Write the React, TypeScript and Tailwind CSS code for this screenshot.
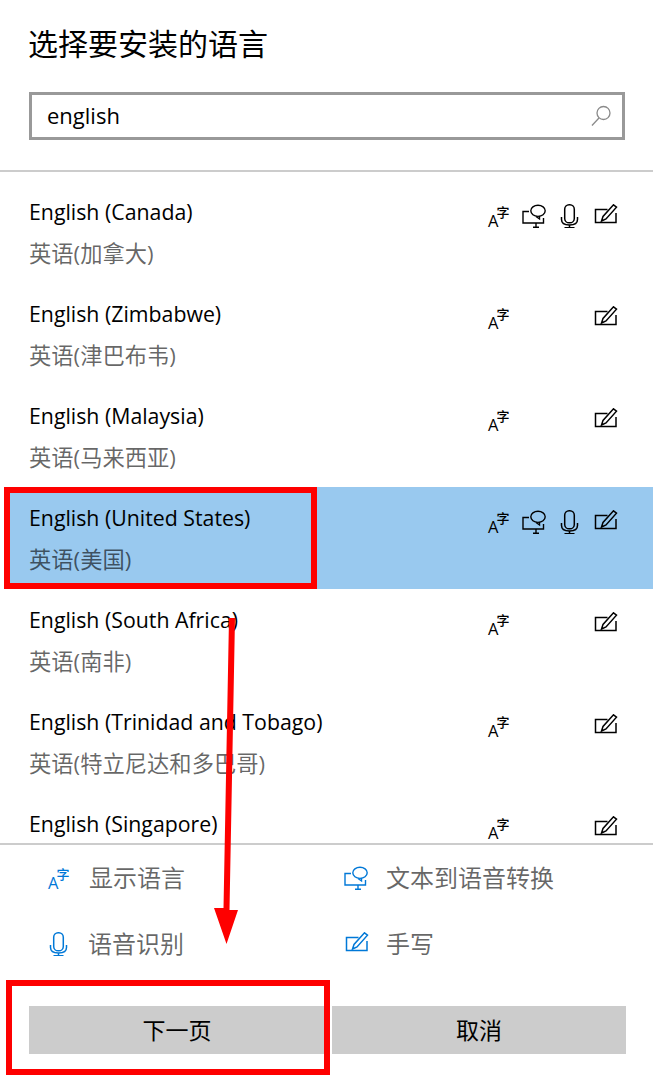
import React from "react";

const sans = "font-['Open_Sans','Noto_Sans_CJK_SC',sans-serif]";

function TransIcon({ className = "" }: { className?: string }) {
  return (
    <svg width="24" height="24" viewBox="0 0 24 24" className={`overflow-visible ${className}`} fill="currentColor">
      <text x="1" y="23" fontSize="16.5" fontFamily="Open Sans, sans-serif">A</text>
      <text x="9.5" y="12.5" fontSize="13" fontWeight="500" fontFamily="Noto Sans CJK SC, sans-serif">字</text>
    </svg>
  );
}
function TtsIcon({ className = "" }: { className?: string }) {
  return (
    <svg width="27" height="24" viewBox="0 0 27 24" className={className} fill="none" stroke="currentColor" strokeWidth="1.4">
      <path d="M8 7.5H2V19H22.5V14" />
      <path d="M12 23.3H18M15 19V23.3" />
      <ellipse cx="17" cy="6.8" rx="7.2" ry="5.6" />
      <path d="M15 12.5L18.5 15V12" />
    </svg>
  );
}
function MicIcon({ className = "" }: { className?: string }) {
  return (
    <svg width="24" height="24" viewBox="0 0 24 24" className={className} fill="none" stroke="currentColor" strokeWidth="1.5">
      <rect x="7.7" y="0.8" width="9.6" height="18" rx="4.4" />
      <path d="M4.5 13V15.5C4.5 19.5 8 21 12.5 21C17 21 20.5 19.5 20.5 15.5V13" />
      <path d="M12.5 21V23.8M7.5 23.8H17.5" />
    </svg>
  );
}
function PenIcon({ className = "" }: { className?: string }) {
  return (
    <svg width="25" height="24" viewBox="0 0 25 24" className={className} fill="none" stroke="currentColor" strokeWidth="1.5">
      <path d="M14.5 5.5H2.5V18.5H23V9" />
      <path d="M20.5 0.8L23.5 3.2L13 15L8.5 17L10 12.5L20.5 0.8Z" />
    </svg>
  );
}

const rows = [
  { name: "English (Canada)", sub: "英语(加拿大)", all: true },
  { name: "English (Zimbabwe)", sub: "英语(津巴布韦)", all: false },
  { name: "English (Malaysia)", sub: "英语(马来西亚)", all: false },
  { name: "English (United States)", sub: "英语(美国)", all: true, active: true },
  { name: "English (South Africa)", sub: "英语(南非)", all: false },
  { name: "English (Trinidad and Tobago)", sub: "英语(特立尼达和多巴哥)", all: false },
  { name: "English (Singapore)", sub: "英语(新加坡)", all: false },
];

export default function App() {
  return (
    <div className={`relative h-[1081px] w-[653px] overflow-hidden bg-white text-black ${sans}`}>
      <h1 className="pl-[28px] pt-[24px] text-[30px] font-normal leading-[40px]">选择要安装的语言</h1>

      <div className="ml-[29px] mr-[28px] mt-[28px] flex h-[48px] items-center justify-between border-[3px] border-[#999999] pl-[15px] pr-[9px]">
        <span className="-mt-[2px] text-[22px] leading-none">english</span>
        <svg width="24" height="24" viewBox="0 0 24 24" fill="none" stroke="#8a8a8a" strokeWidth="1.3">
          <circle cx="14.5" cy="9" r="6.5" />
          <path d="M10 14L3 21.5" />
        </svg>
      </div>

      <div className="mt-[30px] h-[2px] bg-[#cccccc]" />

      <div className="mt-[9px] h-[662px] overflow-hidden">
        {rows.map((r) => (
          <div
            key={r.name}
            className={`ml-1 flex h-[102px] justify-between pl-[25px] ${r.active ? "bg-[#99c9ef]" : ""}`}
          >
            <div className="pt-[16px]">
              <div className="text-[21.3px] leading-[30px]">{r.name}</div>
              <div className="mt-[12px] text-[22.3px] leading-[30px] text-black/60">{r.sub}</div>
            </div>
            <div className="mr-[35px] mt-[23px] flex h-[24px] text-black">
              <TransIcon className="mr-[10px]" />
              <div className="mr-[9px] w-[27px]">{r.all && <TtsIcon />}</div>
              <div className="mr-[12px] w-[24px]">{r.all && <MicIcon />}</div>
              <PenIcon />
            </div>
          </div>
        ))}
      </div>

      <div className="h-[2px] bg-[#cccccc]" />

      <div className="grid grid-cols-[296px_1fr] pl-[47px] pt-[17px] text-[24px] leading-[32px] text-black/60">
        <div className="flex h-[32px] items-center gap-[18px]">
          <TransIcon className="text-[#0078d7]" />
          <span>显示语言</span>
        </div>
        <div className="flex h-[32px] items-center gap-[16px]">
          <TtsIcon className="text-[#0078d7]" />
          <span>文本到语音转换</span>
        </div>
        <div className="mt-[34px] flex h-[32px] items-center gap-[18px]">
          <MicIcon className="-ml-[1px] text-[#0078d7]" />
          <span>语音识别</span>
        </div>
        <div className="mt-[34px] flex h-[32px] items-center gap-[17px]">
          <PenIcon className="ml-[1px] text-[#0078d7]" />
          <span>手写</span>
        </div>
      </div>

      <div className="ml-[29px] mt-[46px] flex w-[597px] gap-[7px]">
        <button className="h-[48px] w-[296px] bg-[#cccccc] text-[23px]">下一页</button>
        <button className="h-[48px] w-[294px] bg-[#cccccc] text-[23px]">取消</button>
      </div>

      {/* annotations drawn over the screenshot */}
      <div className="absolute left-[4px] top-[487px] h-[102px] w-[313px] border-[6px] border-[#fe0000]" />
      <div className="absolute left-[6px] top-[980px] h-[95px] w-[324px] border-[6px] border-[#fe0000]" />
      <svg className="absolute left-[205px] top-[610px]" width="45" height="340" viewBox="0 0 45 340">
        <path d="M24 8L30 8L24.5 300H33L21.5 334L9 298H18.5Z" fill="#fe0000" />
      </svg>
    </div>
  );
}
